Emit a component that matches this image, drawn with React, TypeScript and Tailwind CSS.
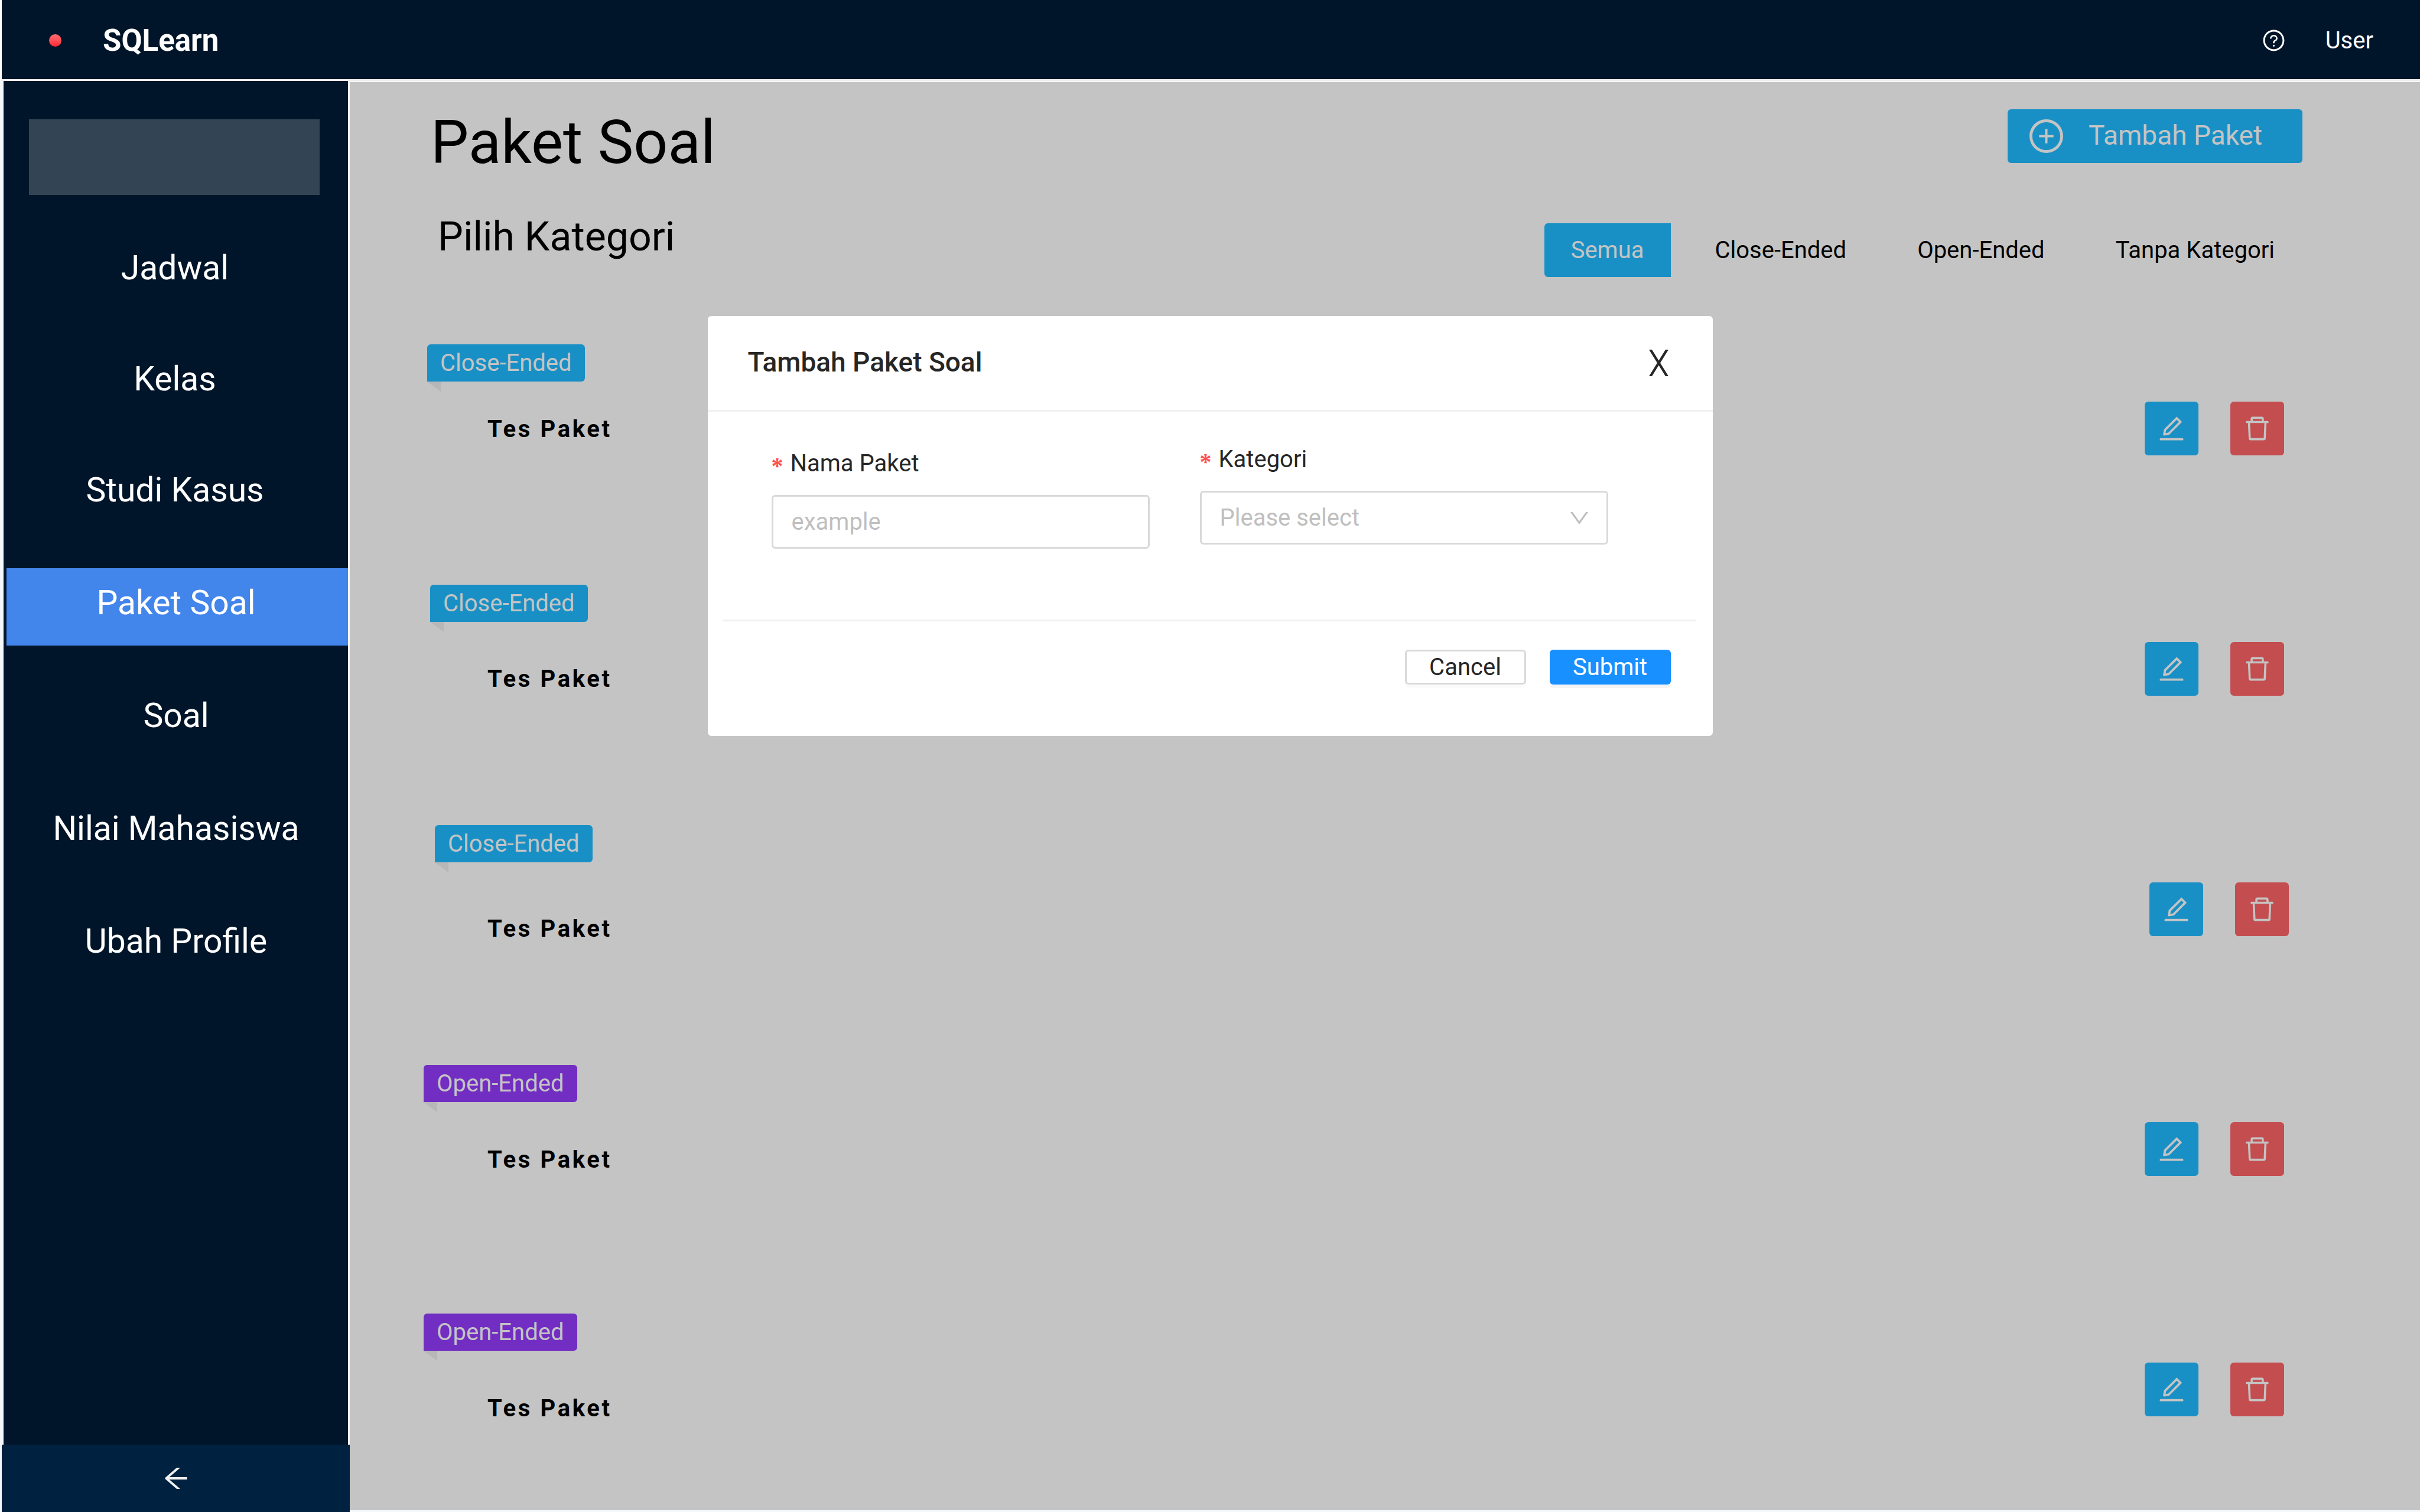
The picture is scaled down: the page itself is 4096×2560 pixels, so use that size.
import React from "react";
import {
  AiOutlineArrowLeft,
  AiOutlineDelete,
  AiOutlineDown,
  AiOutlineEdit,
  AiOutlinePlusCircle,
  AiOutlineQuestionCircle,
} from "react-icons/ai";

const font = "font-['Roboto','Liberation_Sans',sans-serif]";

const menuGroups = [
  { layout: "gap-[57px] pr-[4px]", items: ["Jadwal", "Kelas", "Studi Kasus"] },
  { layout: "gap-[60px]", items: ["Paket Soal", "Soal", "Nilai Mahasiswa", "Ubah Profile"] },
];

const filters = ["Semua", "Close-Ended", "Open-Ended", "Tanpa Kategori"];

type Packet = {
  kind: "Close-Ended" | "Open-Ended";
  row: string;
  tag: string;
  title: string;
  actions: string;
};

const packets: Packet[] = [
  { kind: "Close-Ended", row: "min-h-[407px]", tag: "ml-[131px]", title: "mt-[57px]", actions: "mt-[97px] mr-[230px]" },
  { kind: "Close-Ended", row: "min-h-[407px]", tag: "ml-[136px]", title: "mt-[73px]", actions: "mt-[97px] mr-[230px]" },
  { kind: "Close-Ended", row: "min-h-[406px]", tag: "ml-[144px]", title: "mt-[89px]", actions: "mt-[97px] mr-[222px]" },
  { kind: "Open-Ended", row: "min-h-[421px]", tag: "ml-[125px]", title: "mt-[74px]", actions: "mt-[97px] mr-[230px]" },
  { kind: "Open-Ended", row: "", tag: "ml-[125px]", title: "mt-[74px]", actions: "mt-[83px] mr-[230px]" },
];

function Header() {
  return (
    <header className="flex h-[137px] items-center justify-between border-b-[3px] border-l-[3px] border-b-[#eeeeee] border-l-white bg-[#001529] pt-[3px] pr-[79px] pl-[80px] text-white">
      <div className="flex items-center gap-[70px]">
        <span className="size-[21px] rounded-full bg-linear-to-b from-[#ff6b72] to-[#ff1f30]" />
        <span className="text-[51px] leading-[60px] font-bold">SQLearn</span>
      </div>
      <div className="flex items-center gap-[67px]">
        <button type="button" aria-label="Bantuan">
          <AiOutlineQuestionCircle className="size-[41px]" />
        </button>
        <a href="#user" className="text-[40px] leading-[48px]">
          User
        </a>
      </div>
    </header>
  );
}

function Sidebar() {
  return (
    <aside className="flex w-[592px] shrink-0 flex-col">
      <div className="mr-[3px] ml-[6px] flex flex-1 flex-col bg-[#001529] pt-[65px]">
        <div className="mr-[48px] ml-[43px] h-[128px] bg-[#334454]" />
        <nav className="mt-[65px] flex flex-col gap-[60px] pl-[5px] text-[57px] leading-[67px] text-white">
          {menuGroups.map((group) => (
            <ul key={group.items[0]} className={`flex flex-col ${group.layout}`}>
              {group.items.map((item) => (
                <li key={item}>
                  <a
                    href="#menu"
                    className={`block pt-[25px] pr-[4px] pb-[39px] text-center ${
                      item === "Paket Soal" ? "bg-[#4285eb]" : ""
                    }`}
                  >
                    {item}
                  </a>
                </li>
              ))}
            </ul>
          ))}
        </nav>
      </div>
      <button
        type="button"
        aria-label="Tutup menu"
        className="ml-[3px] flex h-[114px] items-center justify-center bg-[#00213f] text-[#f0f0f0]"
      >
        <AiOutlineArrowLeft className="size-[52px]" />
      </button>
    </aside>
  );
}

function Tag({ kind, className }: { kind: Packet["kind"]; className: string }) {
  return (
    <div className={`relative w-fit ${className}`}>
      <span
        className={`block rounded-md rounded-bl-none px-[22px] text-[40px] leading-[63px] text-[#c4c4c4] ${
          kind === "Close-Ended" ? "bg-[#1990c5]" : "bg-[#722dc3]"
        }`}
      >
        {kind}
      </span>
      <svg className="absolute top-full left-0 h-[17px] w-[23px]" viewBox="0 0 23 17" aria-hidden="true">
        <path d="M0 0H23V17Z" fill="#b7b7ba" />
      </svg>
    </div>
  );
}

function PacketRow({ packet }: { packet: Packet }) {
  return (
    <li className={`flex items-start justify-between ${packet.row}`}>
      <div>
        <Tag kind={packet.kind} className={packet.tag} />
        <h3 className={`ml-[233px] text-[40px] leading-[48px] font-bold tracking-[0.09em] ${packet.title}`}>
          Tes Paket
        </h3>
      </div>
      <div className={`flex gap-[54px] text-[#c4c4c4] ${packet.actions}`}>
        <button
          type="button"
          aria-label="Ubah paket"
          className="flex size-[91px] items-center justify-center rounded-md bg-[#1990c5]"
        >
          <AiOutlineEdit className="size-[51px]" />
        </button>
        <button
          type="button"
          aria-label="Hapus paket"
          className="flex size-[91px] items-center justify-center rounded-md bg-[#c44d4f]"
        >
          <AiOutlineDelete className="size-[51px]" />
        </button>
      </div>
    </li>
  );
}

function Content() {
  return (
    <main className="mt-[2px] mb-[3px] flex-1 bg-[#c4c4c4] pt-[42px] text-black">
      <div className="flex items-start justify-between pr-[199px] pl-[137px]">
        <h1 className="text-[102px] leading-[120px]">Paket Soal</h1>
        <button
          type="button"
          className="mt-[4px] flex h-[91px] items-center gap-[39px] rounded-md bg-[#1990c5] pr-[68px] pl-[33px] text-[46px] text-[#c4c4c4]"
        >
          <AiOutlinePlusCircle className="size-[65px]" />
          <span className="pb-[4px] leading-[54px]">Tambah Paket</span>
        </button>
      </div>
      <div className="mt-[60px] flex items-start justify-between pr-[201px] pl-[149px]">
        <h2 className="text-[68px] leading-[80px]">Pilih Kategori</h2>
        <div className="mt-[17px] flex gap-[30px]">
          {filters.map((filter) => (
            <button
              key={filter}
              type="button"
              className={`h-[91px] px-[45px] pt-px text-[40px] leading-[48px] ${
                filter === "Semua" ? "rounded-l-md bg-[#1990c5] text-[#c4c4c4]" : ""
              }`}
            >
              {filter}
            </button>
          ))}
        </div>
      </div>
      <ul className="mt-[114px]">
        {packets.map((packet, index) => (
          <PacketRow key={index} packet={packet} />
        ))}
      </ul>
    </main>
  );
}

function FieldLabel({ htmlFor, children }: { htmlFor: string; children: React.ReactNode }) {
  return (
    <label htmlFor={htmlFor} className="flex text-[40px] leading-[48px] text-[#262626]">
      <span className="w-[32px] pt-[4px] font-['Liberation_Serif',serif] font-bold text-[#ff4d4f]">*</span>
      {children}
    </label>
  );
}

function AddPacketDialog() {
  return (
    <div className="absolute inset-0 flex items-start justify-center pt-[535px]">
      <form
        role="dialog"
        aria-labelledby="dialog-title"
        onSubmit={(event) => event.preventDefault()}
        className="w-[1701px] rounded-md bg-white text-[#262626]"
      >
        <div className="flex h-[162px] items-center justify-between border-b-[3px] border-[#f0f0f0] pr-[75px] pl-[68px]">
          <h2 id="dialog-title" className="pb-[4px] text-[46px] leading-[54px] font-medium">
            Tambah Paket Soal
          </h2>
          <button type="button" aria-label="Tutup">
            <svg className="h-[45px] w-[33px]" viewBox="0 0 33 45" fill="#262626" aria-hidden="true">
              <path d="M0 0H5L16.5 18.5L28 0H33L19 22.5L33 45H28L16.5 26.5L5 45H0L14 22.5Z" />
            </svg>
          </button>
        </div>
        <div className="flex items-start gap-[85px] px-[108px] pt-[57px]">
          <div className="flex flex-col gap-[25px] pt-[7px]">
            <FieldLabel htmlFor="packet-name">Nama Paket</FieldLabel>
            <input
              id="packet-name"
              type="text"
              placeholder="example"
              className="h-[91px] w-[640px] rounded-md border-[3px] border-[#d9d9d9] bg-white px-[31px] text-[40px] leading-[48px] placeholder:text-[#bfbfbf]"
            />
          </div>
          <div className="flex flex-col gap-[25px]">
            <FieldLabel htmlFor="packet-category">Kategori</FieldLabel>
            <div className="relative">
              <select
                id="packet-category"
                defaultValue=""
                className="block h-[91px] w-[691px] appearance-none rounded-md border-[3px] border-[#d9d9d9] bg-white px-[31px] text-[40px] leading-[48px] text-[#bfbfbf]"
              >
                <option value="">Please select</option>
                <option value="close">Close-Ended</option>
                <option value="open">Open-Ended</option>
              </select>
              <AiOutlineDown className="pointer-events-none absolute top-[26px] right-[29px] size-[40px] text-[#bfbfbf]" />
            </div>
          </div>
        </div>
        <div className="mr-[28px] ml-[25px] mt-[120px] flex justify-end gap-[40px] border-t-[3px] border-[#f0f0f0] pt-[48px] pr-[43px] pb-[87px] text-[40px] leading-[48px]">
          <button
            type="button"
            className="h-[59px] w-[205px] rounded-md border-[3px] border-[#d9d9d9] bg-white shadow-[0_6px_0_rgba(0,0,0,0.016)]"
          >
            Cancel
          </button>
          <button
            type="submit"
            className="h-[59px] w-[205px] rounded-md bg-[#1890ff] text-white shadow-[0_6px_0_rgba(0,0,0,0.043)]"
          >
            Submit
          </button>
        </div>
      </form>
    </div>
  );
}

export default function App() {
  return (
    <div className={`relative flex min-h-screen flex-col bg-[#f5f8fa] ${font}`}>
      <Header />
      <div className="flex flex-1">
        <Sidebar />
        <Content />
      </div>
      <AddPacketDialog />
    </div>
  );
}
